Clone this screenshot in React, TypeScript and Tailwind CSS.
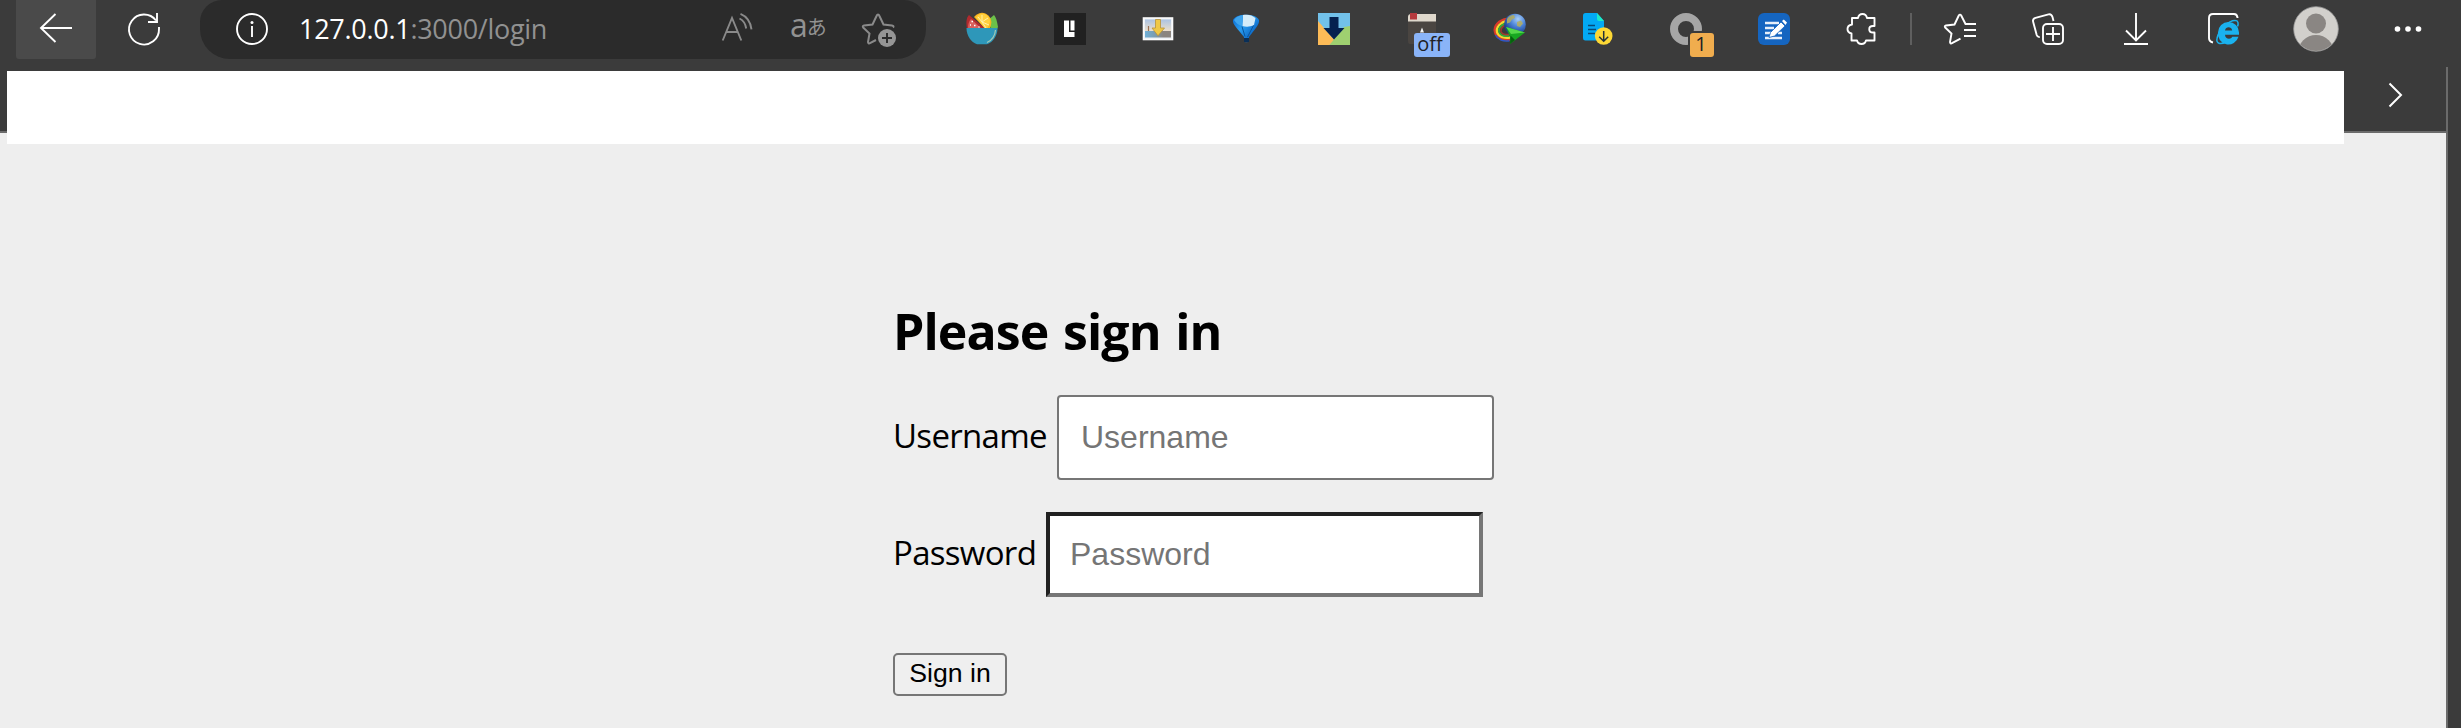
import React from "react";

type IconProps = { children: React.ReactNode };

function Icon({ children }: IconProps) {
  return (
    <svg width="32" height="32" viewBox="0 0 32 32" fill="none" className="block overflow-visible">
      {children}
    </svg>
  );
}

function Cell({ children, className = "w-[88px]" }: { children: React.ReactNode; className?: string }) {
  return <div className={`flex h-[45px] shrink-0 items-start justify-center pt-[13px] ${className}`}>{children}</div>;
}

function FruitBowl() {
  return (
    <Icon>
      <path d="M3 2L20 16H1C0 10 0 5 3 2z" fill="#b02a2e" />
      <path d="M5 6L16 16H2C2 11 3 8 5 6z" fill="#d9605c" />
      <path d="M32 14C31 8 30 4 28 2L22 7l3 9h6z" fill="#6cc04a" />
      <path d="M8 4A9.500 9.500 0 0 1 25 12c-.4 1.600-.8 2.600-1.500 4h-4z" fill="#f9b51e" />
      <path d="M10 4.500A7.500 7.500 0 0 1 23 12l-1.500 3h-3z" fill="#ffcf3d" />
      <path d="M16 2v7l-4-5M16 9l6-4M16 9l7 3M16 9l4 6" stroke="#fff0a8" strokeWidth="1" />
      <path d="M5.500 8.500h1.500M8 12.500h1.500M4 12h1M12.500 14h1" stroke="#fff" strokeWidth="1.400" />
      <path d="M.5 15H31.500C31.500 23 27 29 21 31.300H11C5 29 .5 23 .5 15z" fill="#2e97b9" />
      <path d="M29.500 17c-.5 6-3 10-8.500 12.500" stroke="#a5c9b4" strokeWidth="1.200" />
    </Icon>
  );
}

function PictureDownload() {
  return (
    <Icon>
      <defs>
        <linearGradient id="sky" x1="0" y1="6" x2="0" y2="18" gradientUnits="userSpaceOnUse">
          <stop offset="0" stopColor="#a9c2e4" />
          <stop offset="1" stopColor="#ecdfcb" />
        </linearGradient>
        <linearGradient id="sea" x1="3" y1="0" x2="29" y2="0" gradientUnits="userSpaceOnUse">
          <stop offset="0" stopColor="#6fb0d8" />
          <stop offset=".45" stopColor="#7d98a8" />
          <stop offset=".7" stopColor="#8b8580" />
        </linearGradient>
      </defs>
      <rect x="1.500" y="5" width="29" height="21.500" fill="#e9eef4" stroke="#fbfbfb" strokeWidth="1.600" />
      <rect x="3" y="6.500" width="26" height="12" fill="url(#sky)" />
      <rect x="3" y="18" width="26" height="6.500" fill="url(#sea)" />
      <path d="M6.500 13v5" stroke="#9a6f54" strokeWidth="1.200" />
      <path d="M13.500 6.500h5v8.500h4L16 22.800 10 15h3.500z" fill="#efc845" stroke="#b8923a" strokeWidth=".8" />
    </Icon>
  );
}

function Balloon() {
  return (
    <Icon>
      <defs>
        <linearGradient id="balloon" x1="3" y1="4" x2="29" y2="26" gradientUnits="userSpaceOnUse">
          <stop offset="0" stopColor="#0a6ad0" />
          <stop offset=".4" stopColor="#2a9df0" />
          <stop offset=".7" stopColor="#1273cf" />
          <stop offset="1" stopColor="#06428c" />
        </linearGradient>
      </defs>
      <path d="M3 7C6 0 26 0 29 7c1 4-4 9-10 17v4.500c-1 1-4 1-5 0V24C8 16 2 11 3 7z" fill="url(#balloon)" />
      <path d="M13 2c5-1 9 0 12.500 3L24 12c-4 2-8 2-11.500 1z" fill="#d5ecf9" />
      <path d="M4 7C6.500 3.500 9 2.500 13 2l-1 11c-4-1-6-3-8-6z" fill="#3fa5ee" />
      <path d="M12 13.500l3 10M23.500 12.500L17.500 24" stroke="#0b559c" strokeWidth="1" />
      <path d="M14 25h5v4h-5z" fill="#0a2f57" />
    </Icon>
  );
}

function Book() {
  return (
    <div className="relative">
      <Icon>
        <path d="M2 4Q2 1 5 1H30V9H2z" fill="#dfd8cc" />
        <path d="M2 8.500H30V31H4Q2 31 2 28z" fill="#4a4541" />
        <path d="M4 0h7v6.500H4z" fill="#b63a3d" />
        <path d="M14 19.500l2-5 2 5z" fill="#f2f2f2" />
      </Icon>
      <span className="absolute left-2 top-5 flex h-6 w-9 items-center justify-center rounded-[3px] bg-[#8ab4f8] pb-0.5 pr-1 font-['Open_Sans',sans-serif] text-[20px] leading-6 text-[#202124]">
        off
      </span>
    </div>
  );
}

function Globe() {
  return (
    <Icon>
      <defs>
        <radialGradient id="globe" cx="24" cy="6" r="15" gradientUnits="userSpaceOnUse">
          <stop offset="0" stopColor="#a9d0f8" />
          <stop offset=".5" stopColor="#4c84d8" />
          <stop offset="1" stopColor="#1d3f8c" />
        </radialGradient>
      </defs>
      <path d="M13 6C5 7-.5 13 1 19c1.500 6 8 9 15 7.500" stroke="#d93a2a" strokeWidth="2.400" />
      <path d="M13 8C7 9 1.800 14 3 19c1.500 4.500 7 6.500 13 5.500" stroke="#f5d62e" strokeWidth="2.400" />
      <path d="M12 10.500c-5 1.500-7.500 4.500-7 8 1 3.500 5 5 10 4.500" stroke="#35a83b" strokeWidth="2" />
      <path d="M12 12c-4 1.500-5.500 4-5 6.500 1 2.500 4 3.500 8 3" stroke="#a3392c" strokeWidth="1.600" />
      <path d="M1.500 22c2 4.500 8 7 14 5.800" stroke="#2c58c8" strokeWidth="1.500" />
      <circle cx="21" cy="11.500" r="10.800" fill="url(#globe)" />
      <path d="M13 6c2-3 4-4 7-4l1 3-3 1.500-2 3-3 1zM23 9l4-1.500 2 3-3 3.500-3-1z" fill="#b5ae5e" fillOpacity=".85" />
      <path d="M12 14l19 5.500L16 31v-7z" fill="#17a821" />
      <path d="M12 14l19 5.500-14 1.500z" fill="#55d84a" />
      <path d="M16 31l.5-8.500 4.500 4.500z" fill="#07600f" />
    </Icon>
  );
}

function DocDownload() {
  return (
    <Icon>
      <path d="M3.500 0H15l7 8v19.500H3.500Q1 27.500 1 25V2.500Q1 0 3.500 0z" fill="#03a9f4" />
      <path d="M15 0l7 8h-5Q15 8 15 6z" fill="#1de9c6" />
      <path d="M6 12.500h7M6 16.500h8M6 20.500h7" stroke="#064a78" strokeWidth="1.400" />
      <circle cx="21.700" cy="23" r="8.800" fill="#fdd835" />
      <path d="M21.700 18v10M17.200 23.700l4.500 4.500 4.500-4.500" stroke="#263238" strokeWidth="1.500" />
    </Icon>
  );
}

function Ring() {
  return (
    <div className="relative">
      <Icon>
        <circle cx="16" cy="16" r="12" stroke="#a6a6a6" strokeWidth="8" />
        <rect x="18" y="18" width="16" height="16" fill="#3b3b3b" />
      </Icon>
      <span className="absolute left-5 top-5 flex h-6 w-6 items-center justify-center rounded-[3px] bg-[#f0ad4e] pb-0.5 pr-0.5 font-['Open_Sans',sans-serif] text-[20px] leading-6 text-[#202124]">
        1
      </span>
    </div>
  );
}

function EditTile() {
  return (
    <Icon>
      <rect width="32" height="32" rx="6" fill="#1565c0" />
      <path d="M7 10h14M7 15h9M7 20h6M7 25h17" stroke="#e8f0fa" strokeWidth="2.500" />
      <path d="M20 20h4" stroke="#e8f0fa" strokeWidth="2.500" />
      <path d="M11 24.500l1.500-5L23 9l4 4-10.500 10z" fill="#fff" stroke="#1565c0" strokeWidth=".8" />
      <path d="M24 8l1.800-1.500 3.200 3L27.500 12z" fill="#fff" />
    </Icon>
  );
}

function Toolbar() {
  return (
    <header className="flex h-[67px] items-start bg-[#3b3b3b]">
      <button className="ml-4 flex h-[59px] w-20 shrink-0 items-start justify-center rounded-b-[3px] bg-[#4a4a4a] pt-[13px]">
        <Icon>
          <path d="M32 15H1M15.500 1L1 15l14.500 14" stroke="#fff" strokeWidth="1.900" />
        </Icon>
      </button>
      <Cell className="ml-4 w-16">
        <Icon>
          <path d="M31 14v2A15 15 0 1 1 28 7.500" stroke="#fff" strokeWidth="1.900" />
          <path d="M29 0v9h-9" stroke="#fff" strokeWidth="1.900" />
        </Icon>
      </Cell>
      <div className="ml-6 flex h-[59px] w-[726px] shrink-0 items-start rounded-b-[30px] rounded-t-[22px] bg-[#2b2b2b] pl-9">
        <Cell className="w-8">
          <Icon>
            <circle cx="16" cy="16" r="15" stroke="#fff" strokeWidth="1.900" />
            <path d="M16 13v11" stroke="#fff" strokeWidth="1.900" />
            <circle cx="16" cy="9.500" r="1.500" fill="#fff" />
          </Icon>
        </Cell>
        <div className="ml-[31px] w-[421px] pt-2 font-['Open_Sans',sans-serif] text-[27px] leading-[42px] tracking-[-0.28px] text-[#919191]">
          <span className="text-white">127.0.0.1</span>:3000/login
        </div>
        <Cell className="ml-0.5 w-8">
          <Icon>
            <path d="M.7 27.500L10 5l9.300 22.500M4.300 19h11.400" stroke="#8a8a8a" strokeWidth="1.900" />
            <path d="M17.500 5.500c4 2 6 5 6.700 10M18.500.8c6 2.500 10 7.500 11 15.500" stroke="#8a8a8a" strokeWidth="1.900" />
          </Icon>
        </Cell>
        <div className="ml-[36px] flex h-[59px] w-[37px] items-start text-[#929292]">
          <span className="pt-[9px] font-['Open_Sans',sans-serif] text-[32px] leading-[32px] tracking-[-1px]">a</span>
          <span className="pt-[11px] font-['Noto_Sans_CJK_JP',sans-serif] text-[20px] leading-[32px]">あ</span>
        </div>
        <Cell className="ml-[35px] w-8">
          <Icon>
            <path
              d="M31 14.500c1-1 .5-1.800-1-2l-8.500-1-4.300-9c-.5-1.200-1.900-1.200-2.400 0l-4.300 9-8.500 1c-1.300.2-1.500 1.200-.8 2L7.500 20.500 6 29c0 1.300 1 1.800 2 1.200l6-3.200"
              stroke="#8a8a8a"
              strokeWidth="2"
            />
            <circle cx="25" cy="25" r="9" fill="#959595" />
            <path d="M25 20v10M20 25h10" stroke="#2b2b2b" strokeWidth="1.900" />
          </Icon>
        </Cell>
      </div>
      <Cell className="ml-3 w-[88px]">
        <FruitBowl />
      </Cell>
      <Cell>
        <Icon>
          <rect width="32" height="32" fill="#212121" />
          <path d="M10 7.500h5V19h5.500v5H10z" fill="#fff" />
          <path d="M16.500 7.500h4v10h-4z" fill="#fff" />
        </Icon>
      </Cell>
      <Cell>
        <PictureDownload />
      </Cell>
      <Cell>
        <Balloon />
      </Cell>
      <Cell>
        <Icon>
          <rect width="32" height="32" fill="#72c1ea" />
          <path d="M0 8l16.500 19-5 5H0z" fill="#fdbb57" />
          <path d="M11.500 32L26 14l6-1v19z" fill="#9fd070" />
          <path d="M11.500 4h9v11h6L16 26.500 5.500 15h6z" fill="#04214f" />
        </Icon>
      </Cell>
      <Cell>
        <Book />
      </Cell>
      <Cell>
        <Globe />
      </Cell>
      <Cell>
        <DocDownload />
      </Cell>
      <Cell>
        <Ring />
      </Cell>
      <Cell>
        <EditTile />
      </Cell>
      <Cell>
        <Icon>
          <path
            d="M6 5h6C12.500 2.500 14 1 16.500 1s4 1.500 4.500 4H28.500V13h-1.500c-5 0-5 6.500 0 6.500h1.500V27.500H20c-.5 2-2 3.500-4.500 3.500s-4-1.500-4.500-3.500H5.500v-7C3 20 1.500 18.500 1.500 16s1.500-4 4.500-4.500z"
            stroke="#fff"
            strokeWidth="1.900"
            strokeLinejoin="round"
          />
        </Icon>
      </Cell>
      <Cell className="w-2.5">
        <span className="h-8 w-0.5 bg-[#5f5f5f]" />
      </Cell>
      <Cell>
        <Icon>
          <path
            d="M32 11H21.500l-4.300-8.500c-.5-1.200-1.900-1.200-2.400 0l-4.300 9-8.500 1c-1.300.2-1.500 1.200-.8 2L7.500 20.500 6 29c0 1.300 1 1.800 2 1.200l8.500-4.500"
            stroke="#fff"
            strokeWidth="1.900"
          />
          <path d="M20 17h12M20 23h12" stroke="#fff" strokeWidth="1.900" />
        </Icon>
      </Cell>
      <Cell>
        <Icon>
          <rect x="11" y="11" width="20" height="20" rx="4" stroke="#fff" strokeWidth="1.900" />
          <path d="M21 14v14M14 21h14" stroke="#fff" strokeWidth="1.900" />
          <path d="M21.500 8l-1-4c-.7-2.200-2-3.200-4-2.700L3.500 4.800C1.300 5.500.6 7 1.200 9l3.500 13c.5 1.500 1.500 2.200 3 2" stroke="#fff" strokeWidth="1.900" />
        </Icon>
      </Cell>
      <Cell>
        <Icon>
          <path d="M16 0v27M6 17.500L16 27.500l10-10M4 31h24" stroke="#fff" strokeWidth="1.900" />
        </Icon>
      </Cell>
      <Cell>
        <Icon>
          <path d="M29.500 5V4.500Q29 1 26 1H5Q1 1 1 5v20q0 3.500 4 4.500" stroke="#fff" strokeWidth="1.900" />
          <path
            d="M10 19.500a10.500 10.500 0 0 1 21 0v2.300H17c0 4.500 6 5 7.300 2h6.200A10.500 10.500 0 0 1 10 19.500zm7-2h7.200c-.5-4.200-6.600-4.200-7.200 0z"
            fill="#1ab2ee"
            fillRule="evenodd"
          />
          <path d="M18 29c-6 3-10 1.500-9-3.500C10.500 17 21 7 27.500 7.500c3 0 3 3.500 2 6" stroke="#1ab2ee" strokeWidth="1.500" />
        </Icon>
      </Cell>
      <div className="flex h-[59px] w-24 shrink-0 justify-center pt-1.5">
        <svg width="46" height="46" viewBox="0 0 46 46" className="block">
          <defs>
            <clipPath id="avatar">
              <circle cx="23" cy="23" r="22" />
            </clipPath>
          </defs>
          <circle cx="23" cy="23" r="22.300" fill="#d2d0cc" stroke="#9c9c9c" strokeWidth=".8" />
          <circle cx="23" cy="17.500" r="10" fill="#8a8683" />
          <circle cx="23" cy="47" r="18" fill="#8a8683" clipPath="url(#avatar)" />
        </svg>
      </div>
      <Cell>
        <Icon>
          <circle cx="5.500" cy="16" r="2.800" fill="#fff" />
          <circle cx="16" cy="16" r="2.800" fill="#fff" />
          <circle cx="26.500" cy="16" r="2.800" fill="#fff" />
        </Icon>
      </Cell>
    </header>
  );
}

function SignIn() {
  return (
    <form className="ml-[893px] flex flex-col items-start pt-[168px] text-black" onSubmit={(e) => e.preventDefault()}>
      <h2 className="whitespace-nowrap font-['Open_Sans',sans-serif] text-[50px] font-bold leading-[60px] tracking-[-0.9px] [word-spacing:2.5px]">
        Please sign in
      </h2>
      <div className="mt-[34px] flex h-[85px]">
        <label htmlFor="username" className="w-[164px] pt-[13px] font-['Open_Sans',sans-serif] text-[33px] leading-[55px] tracking-[-0.7px]">
          Username
        </label>
        <input
          id="username"
          placeholder="Username"
          className="w-[437px] rounded-[4px] border-2 border-[#767676] bg-white pb-px pl-[22px] font-['Liberation_Sans',sans-serif] text-[32px] outline-none placeholder:text-[#757575]"
        />
      </div>
      <div className="mt-8 flex h-[85px]">
        <label htmlFor="password" className="w-[153px] pt-[13px] font-['Open_Sans',sans-serif] text-[33px] leading-[55px] tracking-[-0.7px]">
          Password
        </label>
        <input
          id="password"
          type="password"
          placeholder="Password"
          className="w-[437px] border-4 border-b-[#767676] border-l-[#212121] border-r-[#767676] border-t-[#212121] bg-white pb-px pl-5 font-['Liberation_Sans',sans-serif] text-[32px] outline-none placeholder:text-[#757575]"
        />
      </div>
      <button className="mt-14 h-[43px] w-[114px] rounded-[5px] border-2 border-[#767676] bg-[#efefef] pb-1 font-['Liberation_Sans',sans-serif] text-[26.67px] leading-[36px]">
        Sign in
      </button>
    </form>
  );
}

export default function App() {
  return (
    <div className="flex h-[728px] w-[2461px] flex-col overflow-hidden bg-[#3b3b3b]">
      <Toolbar />
      <div className="flex min-h-0 flex-1">
        <div className="w-[2446px] bg-[#eeeeee]">
          <div className="flex h-[66px] items-start border-b-2 border-[#6b6b6b] bg-[#3b3b3b] pl-[7px] pt-1">
            <div className="h-[73px] w-[2337px] shrink-0 bg-white" />
            <svg width="16" height="26" viewBox="0 0 16 26" fill="none" className="ml-[44px] mt-[11px]">
              <path d="M1.500 1.500L13 13 1.500 24.500" stroke="#fff" strokeWidth="2" />
            </svg>
          </div>
          <SignIn />
        </div>
        <div className="w-0.5 bg-[#6b6b6b]" />
      </div>
    </div>
  );
}
